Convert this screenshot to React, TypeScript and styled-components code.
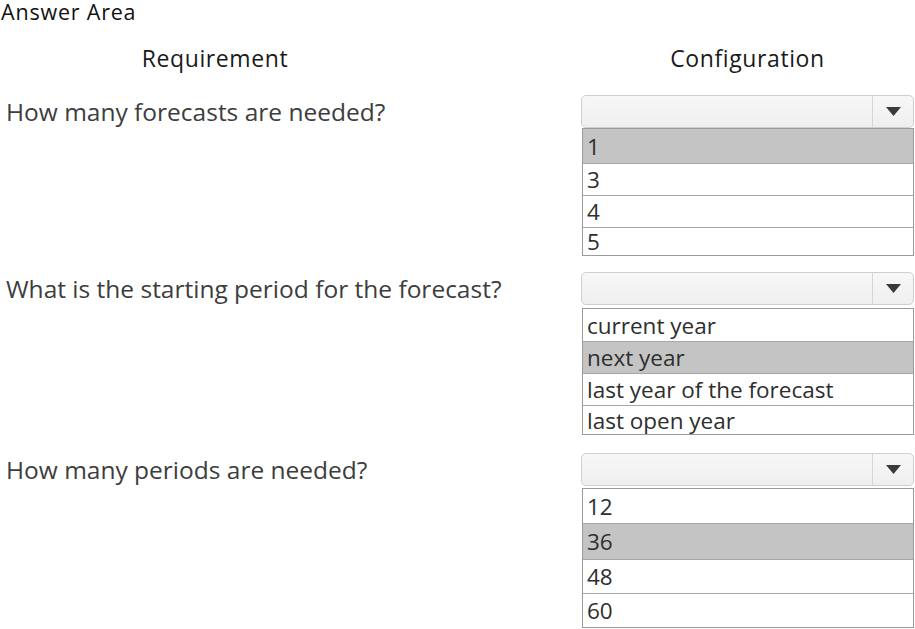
import styled, { createGlobalStyle } from 'styled-components';

const GlobalStyle = createGlobalStyle`
  html, body {
    margin: 0;
    padding: 0;
    background: #ffffff;
  }
  body {
    font-family: 'Open Sans', 'Noto Sans', sans-serif;
  }
`;

type Question = {
  text: string;
  options: string[];
  selected: number;
  rowHeights: number[];
  gap: number;
  spacing: number;
};

const questions: Question[] = [
  {
    text: 'How many forecasts are needed?',
    options: ['1', '3', '4', '5'],
    selected: 0,
    rowHeights: [34, 32, 32, 28],
    gap: 0,
    spacing: 22,
  },
  {
    text: 'What is the starting period for the forecast?',
    options: ['current year', 'next year', 'last year of the forecast', 'last open year'],
    selected: 1,
    rowHeights: [32, 32, 32, 29],
    gap: 3,
    spacing: 16,
  },
  {
    text: 'How many periods are needed?',
    options: ['12', '36', '48', '60'],
    selected: 1,
    rowHeights: [34, 36, 34, 34],
    gap: 2,
    spacing: 18,
  },
];

const App = () => {
  return (
    <Page>
      <GlobalStyle />
      <Title>Answer Area</Title>
      <HeaderRow>
        <HeaderCell $offset={151}>Requirement</HeaderCell>
        <HeaderCell $offset={0}>Configuration</HeaderCell>
      </HeaderRow>
      {questions.map((q, i) => (
        <QuestionRow key={i} $spacing={q.spacing}>
          <QuestionText>{q.text}</QuestionText>
          <Dropdown>
            <Combo>
              <ComboArrow>
                <svg width="15" height="9" viewBox="0 0 15 9">
                  <path d="M0 0 H15 L7.5 9 Z" fill="#3a3a3a" />
                </svg>
              </ComboArrow>
            </Combo>
            <OptionList $gap={q.gap}>
              {q.options.map((opt, j) => (
                <Option
                  key={opt}
                  $selected={j === q.selected}
                  style={{ height: q.rowHeights[j] }}
                >
                  {opt}
                </Option>
              ))}
            </OptionList>
          </Dropdown>
        </QuestionRow>
      ))}
    </Page>
  );
};

const Page = styled.div`
  width: 915px;
  height: 629px;
  overflow: hidden;
  background: #ffffff;
  color: #333333;
`;

const Title = styled.div`
  font-size: 21.5px;
  line-height: 30px;
  height: 24px;
  margin-top: -3px;
  padding: 0 0 0 1px;
  color: #111111;
  letter-spacing: 0.8px;
`;

const HeaderRow = styled.div`
  display: grid;
  grid-template-columns: 581px 333px;
  margin-top: 22px;
  height: 30px;
`;

const HeaderCell = styled.div<{ $offset: number }>`
  font-size: 23px;
  line-height: 30px;
  color: #1a1a1a;
  text-align: center;
  letter-spacing: 0.6px;
  padding-right: ${(p) => p.$offset}px;
`;

const QuestionRow = styled.div<{ $spacing: number }>`
  display: grid;
  grid-template-columns: 581px 1fr;
  align-items: start;
  margin-top: ${(p) => p.$spacing}px;
`;

const QuestionText = styled.div`
  font-size: 24.5px;
  line-height: 33px;
  padding-left: 6px;
  color: #3d3d3d;
`;

const Dropdown = styled.div`
  display: flex;
  flex-direction: column;
  width: 333px;
`;

const Combo = styled.div`
  height: 31px;
  border: 1px solid #cfcfcf;
  border-radius: 5px;
  background: linear-gradient(#f7f7f7, #efefef);
  display: flex;
  justify-content: flex-end;
`;

const ComboArrow = styled.div`
  width: 40px;
  border-left: 1px solid #d6d6d6;
  display: flex;
  align-items: center;
  justify-content: center;
`;

const OptionList = styled.div<{ $gap: number }>`
  margin-top: ${(p) => p.$gap}px;
  margin-left: 1px;
  border: 1px solid #9a9a9a;
  display: flex;
  flex-direction: column;
`;

const Option = styled.div<{ $selected: boolean }>`
  box-sizing: border-box;
  display: flex;
  align-items: center;
  padding-left: 4px;
  font-size: 22.5px;
  color: #2e2e2e;
  background: ${(p) => (p.$selected ? '#c4c4c4' : '#ffffff')};
  border-top: 1px solid #a8a8a8;

  &:first-child {
    border-top: none;
  }
`;

export default App;
